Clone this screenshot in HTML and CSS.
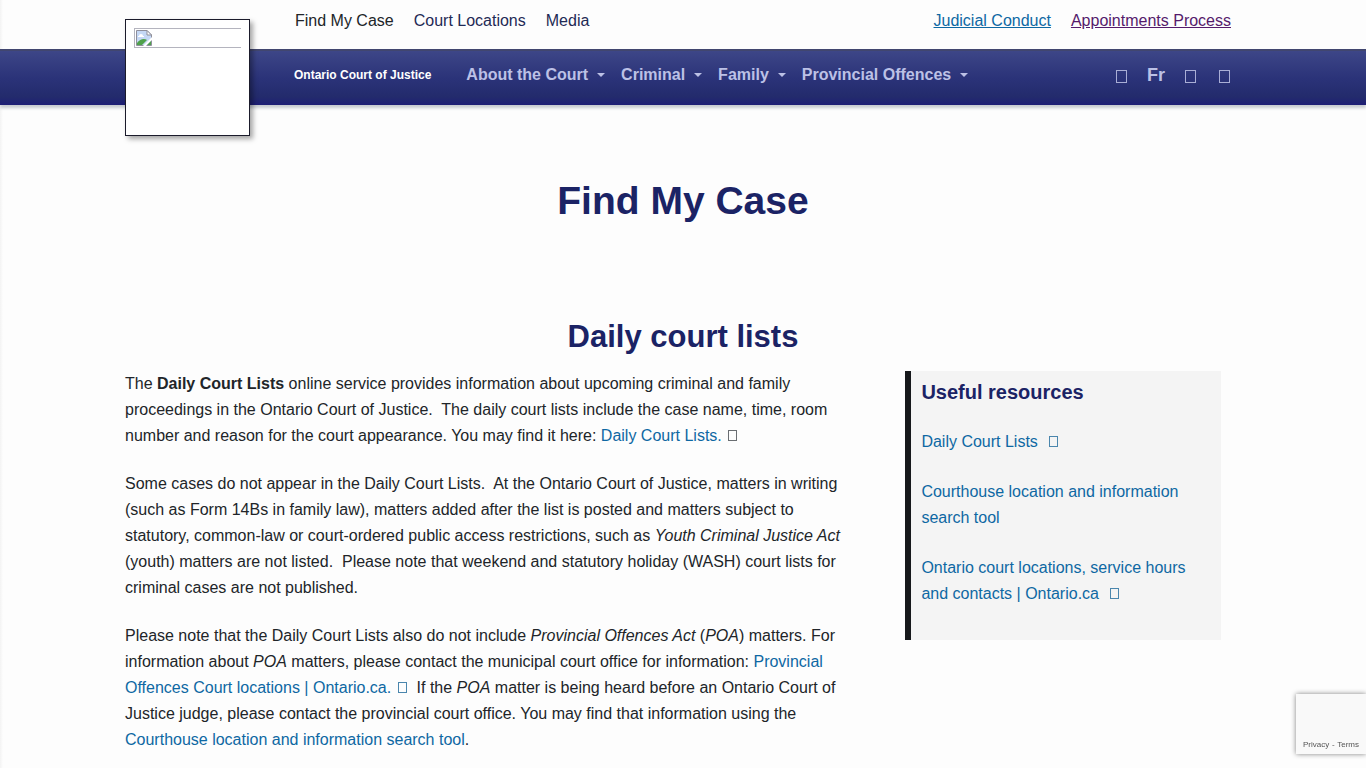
FILE: index.html
```
<!DOCTYPE html>
<html lang="en">
  <head>
    <meta charset="utf-8">
    <meta name="viewport" content="width=device-width, initial-scale=1">
    <title>Find My Case | Ontario Court of Justice</title>
    <link rel="stylesheet" href="styles.css">
  </head>
  <body>
    <header class="header">
      <div class="container top-bar">
        <a class="logo" href="#" aria-label="Home">
          <span class="logo-frame">
            <svg width="16" height="16" viewBox="0 0 16 16" aria-hidden="true">
              <path d="M0.5 0.5H11L15.5 5V15.5H0.5Z" fill="#c5d8f5" stroke="#8f8f9b" />
              <path d="M11 0.5V5H15.5Z" fill="#fff" stroke="#8f8f9b" />
              <path d="M3 6a2 2 0 0 1 4 0h1v1H2V6Z" fill="#fff" />
              <path d="M1 15V13C4 9 8 8 11 10L6 15Z" fill="#4fa14b" />
              <path d="M7 16L16 7V10L10 16Z" fill="#fff" />
              <path d="M11 15L15 11V15Z" fill="#4fa14b" />
            </svg>
          </span>
        </a>
        <nav class="top-links">
          <a class="current" href="#">Find My Case</a>
          <a href="#">Court Locations</a>
          <a href="#">Media</a>
        </nav>
        <nav class="top-links side-links">
          <a href="#">Judicial Conduct</a>
          <a class="visited" href="#">Appointments Process</a>
        </nav>
      </div>
      <div class="main-bar">
        <div class="container bar-inner">
          <a class="site-name" href="#">Ontario Court of Justice</a>
          <nav class="menu">
            <button class="menu-item" type="button">About the Court</button>
            <button class="menu-item" type="button">Criminal</button>
            <button class="menu-item" type="button">Family</button>
            <button class="menu-item" type="button">Provincial Offences</button>
          </nav>
          <div class="tools">
            <a class="tool" href="#" aria-label="Contact"></a>
            <a class="lang" href="#">Fr</a>
            <a class="tool" href="#" aria-label="Accessibility"></a>
            <button class="tool" type="button" aria-label="Search"></button>
          </div>
        </div>
      </div>
    </header>

    <main class="container main">
      <h1>Find My Case</h1>
      <h2>Daily court lists</h2>
      <div class="columns">
        <div class="content">
          <p>The <strong>Daily Court Lists</strong> online service provides information about upcoming criminal and family proceedings in the Ontario Court of Justice.&nbsp; The daily court lists include the case name, time, room number and reason for the court appearance. You may find it here: <a href="#">Daily Court Lists.</a> <span class="ext dark"></span></p>
          <p>Some cases do not appear in the Daily Court Lists.&nbsp; At the Ontario Court of Justice, matters in writing (such as Form 14Bs in family law), matters added after the list is posted and matters subject to statutory, common-law or court-ordered public access restrictions, such as <em>Youth Criminal Justice Act</em> (youth) matters are not listed.&nbsp; Please note that weekend and statutory holiday (WASH) court lists for criminal cases are not published.</p>
          <p>Please note that the Daily Court Lists also do not include <em>Provincial Offences Act</em> (<em>POA</em>) matters. For information about <em>POA</em> matters, please contact the municipal court office for information: <a href="#">Provincial Offences Court locations | Ontario.ca. <span class="ext"></span></a>&nbsp; If the <em>POA</em> matter is being heard before an Ontario Court of Justice judge, please contact the provincial court office. You may find that information using the <a href="#">Courthouse location and information search tool</a>.</p>
        </div>
        <aside class="resources">
          <h3>Useful resources</h3>
          <a href="#">Daily Court Lists&nbsp; <span class="ext"></span></a>
          <a href="#">Courthouse location and information search tool</a>
          <a href="#">Ontario court locations, service hours and contacts | Ontario.ca&nbsp; <span class="ext"></span></a>
        </aside>
      </div>
    </main>

    <div class="captcha"><a href="#">Privacy</a> <span>-</span> <a href="#">Terms</a></div>
  </body>
</html>
```

FILE: styles.css
```
* {
  box-sizing: border-box;
}
body {
  margin: 0;
  min-height: 100vh;
  font-family: "Liberation Sans", Arial, sans-serif;
  font-size: 16px;
  line-height: 26px;
  color: #212529;
  background: linear-gradient(to right, #f3f3f3, #fdfdfd 3px);
}
a {
  color: #0e68a3;
  text-decoration: none;
}
button {
  font: inherit;
  padding: 0;
  border: none;
  background: none;
}
.container {
  max-width: 1116px;
  margin: 0 auto;
}

/* header */
.header {
  line-height: 24px;
}
.top-bar {
  position: relative;
  display: flex;
  justify-content: space-between;
  padding: 9px 10px 16px 170px;
}
.top-links {
  display: flex;
  gap: 20px;
}
.top-links a {
  color: #1f2a55;
}
.top-links .current {
  color: #212529;
}
.side-links a {
  color: #0e68a3;
  text-decoration: underline;
}
.side-links .visited {
  color: #551a6b;
}
.logo {
  position: absolute;
  top: 19px;
  left: 0;
  width: 125px;
  height: 117px;
  padding: 8px;
  background: #fff;
  border: 1px solid #1b1b2b;
  box-shadow: 3px 3px 5px rgba(0, 0, 0, 0.35);
}
.logo-frame {
  display: block;
  height: 20px;
  padding: 1px;
  border: 1px solid #b4b4be;
  border-right: none;
}
.logo-frame svg {
  display: block;
}
.main-bar {
  background: linear-gradient(#3d4687, #2b3379 50%, #232b6c 85%, #1e1e76);
  border-top: 2px solid #41466f;
  box-shadow: 0 3px 3px #c6cacf;
}
.bar-inner {
  display: flex;
  align-items: center;
  padding: 12px 8px 18px 169px;
}
.site-name {
  margin-right: 35px;
  font-size: 12px;
  font-weight: bold;
  color: #fff;
}
.menu {
  display: flex;
  gap: 16px;
}
.menu-item {
  display: flex;
  align-items: center;
  gap: 9px;
  font-weight: bold;
  color: #bcc1e6;
}
.menu-item::after {
  content: "";
  border-top: 4px solid;
  border-left: 4px solid transparent;
  border-right: 4px solid transparent;
}
.tools {
  display: flex;
  align-items: center;
  gap: 17px;
  margin-left: auto;
}
.tool {
  width: 11px;
  height: 13px;
  margin: 3px 3px 0;
  border: 1px solid #a9aed6;
}
.lang {
  font-size: 18px;
  font-weight: bold;
  color: #bcc1e6;
}

/* page */
.main {
  padding-top: 72px;
}
h1,
h2,
h3 {
  margin: 0;
  color: #1b2365;
}
h1 {
  margin-bottom: 93px;
  font-size: 39px;
  line-height: 48px;
  text-align: center;
}
h2 {
  margin-bottom: 15px;
  font-size: 31px;
  line-height: 38px;
  text-align: center;
}
.columns {
  display: grid;
  grid-template-columns: 7fr 3fr;
  align-items: start;
  gap: 44px;
  padding-right: 20px;
}
.content p {
  margin: 0 0 22px;
}
.content p:last-child {
  margin-bottom: 0;
}
.resources {
  display: flex;
  flex-direction: column;
  gap: 24px;
  padding: 8px 10px 33px;
  background: #f4f4f4;
  border-left: 6px solid #16181b;
}
.resources h3 {
  font-size: 20px;
}
.ext {
  display: inline-block;
  width: 9px;
  height: 11px;
  margin: 0 1px 0 2px;
  border: 1px solid #4a86ad;
}
.ext.dark {
  border-color: #6a6e72;
}

.captcha {
  position: fixed;
  right: 0;
  bottom: 14px;
  display: flex;
  align-items: flex-end;
  justify-content: space-between;
  width: 70px;
  height: 60px;
  padding: 4px 7px;
  font-size: 8px;
  line-height: 10px;
  color: #555;
  background: #f9f9f9;
  box-shadow: 0 0 5px #808080;
}
.captcha a {
  color: #555;
}
```
